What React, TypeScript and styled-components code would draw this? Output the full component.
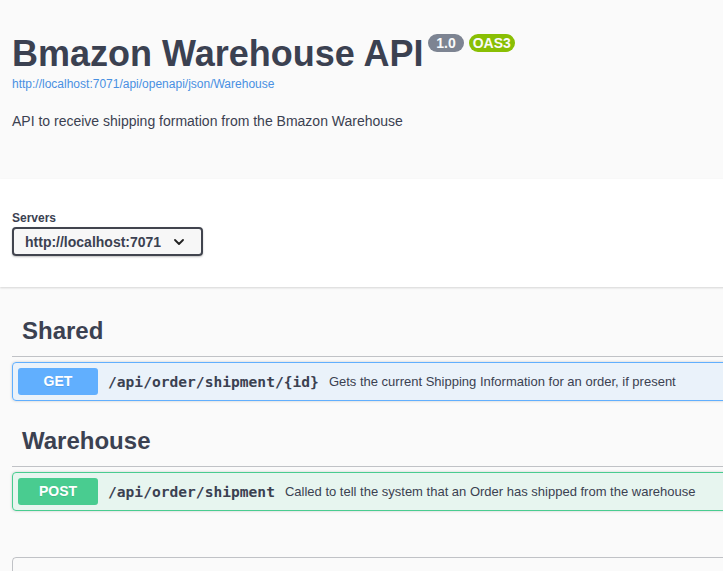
import React from "react";
import styled, { createGlobalStyle } from "styled-components";

const GlobalStyle = createGlobalStyle`
  html, body {
    margin: 0;
    padding: 0;
    background: #fafafa;
    overflow: hidden;
  }
  body {
    font-family: "Liberation Sans", Arial, sans-serif;
    color: #3b4151;
  }
`;

const Page = styled.div`
  width: 1000px;
  display: flex;
  flex-direction: column;
`;

const InfoSection = styled.section`
  background: #fafafa;
  padding: 33px 12px 50px;
  display: flex;
  flex-direction: column;
`;

const TitleRow = styled.div`
  display: flex;
  align-items: flex-start;
`;

const Title = styled.h2`
  margin: 0;
  font-size: 36px;
  line-height: 41px;
  font-weight: 700;
  color: #3b4151;
`;

const Badge = styled.span<{ $tone: "grey" | "green" }>`
  margin: 1px 0 0 5px;
  padding: 2px 4px;
  border-radius: 57px;
  background: ${(p) => (p.$tone === "grey" ? "#7d8492" : "#89bf04")};
  color: #fafafa;
  font-size: 14px;
  line-height: 14px;
  font-weight: 700;
  white-space: pre;
`;

const BaseUrl = styled.a`
  margin-top: 3px;
  font-size: 12px;
  line-height: 14px;
  color: #4990e2;
  text-decoration: none;
`;

const Description = styled.p`
  margin: 22px 0 0;
  font-size: 14px;
  line-height: 16px;
  color: #3b4151;
`;

const ServersSection = styled.section`
  background: #fff;
  box-shadow: 0 1px 2px 0 rgba(0, 0, 0, 0.15);
  padding: 32px 12px 31px;
  display: flex;
  flex-direction: column;
  align-items: flex-start;
`;

const ServersLabel = styled.span`
  font-size: 12px;
  line-height: 14px;
  font-weight: 700;
  color: #3b4151;
  margin-bottom: 2px;
`;

const ServerSelect = styled.div`
  box-sizing: border-box;
  width: 191px;
  height: 29px;
  display: flex;
  align-items: center;
  justify-content: space-between;
  padding: 1px 17px 0 11px;
  border: 2px solid #41444e;
  border-radius: 4px;
  background: #f7f7f7;
  box-shadow: 0 1px 2px 0 rgba(0, 0, 0, 0.25);
  font-size: 14px;
  font-weight: 700;
  color: #3b4151;
`;

const Operations = styled.div`
  padding: 19px 0 0 12px;
  display: flex;
  flex-direction: column;
`;

const TagSection = styled.div`
  display: flex;
  flex-direction: column;
`;

const TagHeading = styled.h3`
  margin: 0 0 5px;
  padding: 10px 20px 10px 10px;
  font-size: 24px;
  line-height: 30px;
  font-weight: 700;
  color: #3b4151;
  border-bottom: 1px solid rgba(59, 65, 81, 0.3);
`;

const methodColors = {
  get: { main: "#61affe", bg: "rgba(97, 175, 254, 0.1)" },
  post: { main: "#49cc90", bg: "rgba(73, 204, 144, 0.1)" },
};

type Method = keyof typeof methodColors;

const OpBlock = styled.div<{ $method: Method }>`
  margin: 0 0 15px;
  border: 1px solid ${(p) => methodColors[p.$method].main};
  background: ${(p) => methodColors[p.$method].bg};
  border-radius: 4px;
  box-shadow: 0 0 3px rgba(0, 0, 0, 0.19);
  padding: 5px;
  display: flex;
  align-items: center;
`;

const MethodTag = styled.span<{ $method: Method }>`
  min-width: 80px;
  padding: 6px 0;
  border-radius: 3px;
  background: ${(p) => methodColors[p.$method].main};
  color: #fff;
  font-size: 14px;
  line-height: 15px;
  font-weight: 700;
  text-align: center;
  text-shadow: 0 1px 0 rgba(0, 0, 0, 0.1);
`;

const Path = styled.span`
  padding: 0 10px;
  font-family: "DejaVu Sans Mono", monospace;
  font-size: 14.6px;
  font-weight: 700;
  color: #3b4151;
`;

const Summary = styled.span`
  font-size: 13px;
  color: #3b4151;
`;

const ModelsBox = styled.section`
  margin: 31px 0 0;
  height: 120px;
  border: 1px solid rgba(59, 65, 81, 0.3);
  border-radius: 4px;
`;

const Chevron = () => (
  <svg width="10" height="6" viewBox="0 0 10 6" aria-hidden="true">
    <path d="M1 1 L5 5 L9 1" fill="none" stroke="#222" strokeWidth="1.8" strokeLinecap="round" strokeLinejoin="round" />
  </svg>
);

const ops: { tag: string; method: Method; path: string; summary: string }[] = [
  {
    tag: "Shared",
    method: "get",
    path: "/api/order/shipment/{id}",
    summary: "Gets the current Shipping Information for an order, if present",
  },
  {
    tag: "Warehouse",
    method: "post",
    path: "/api/order/shipment",
    summary: "Called to tell the system that an Order has shipped from the warehouse",
  },
];

export default function App() {
  return (
    <>
      <GlobalStyle />
      <Page>
        <InfoSection>
          <TitleRow>
            <Title>Bmazon Warehouse API</Title>
            <Badge $tone="grey"> 1.0 </Badge>
            <Badge $tone="green">OAS3</Badge>
          </TitleRow>
          <BaseUrl href="#">http://localhost:7071/api/openapi/json/Warehouse</BaseUrl>
          <Description>API to receive shipping formation from the Bmazon Warehouse</Description>
        </InfoSection>
        <ServersSection>
          <ServersLabel>Servers</ServersLabel>
          <ServerSelect>
            <span>http://localhost:7071</span>
            <Chevron />
          </ServerSelect>
        </ServersSection>
        <Operations>
          {ops.map((op) => (
            <TagSection key={op.tag}>
              <TagHeading>{op.tag}</TagHeading>
              <OpBlock $method={op.method}>
                <MethodTag $method={op.method}>{op.method.toUpperCase()}</MethodTag>
                <Path>{op.path}</Path>
                <Summary>{op.summary}</Summary>
              </OpBlock>
            </TagSection>
          ))}
          <ModelsBox />
        </Operations>
      </Page>
    </>
  );
}
